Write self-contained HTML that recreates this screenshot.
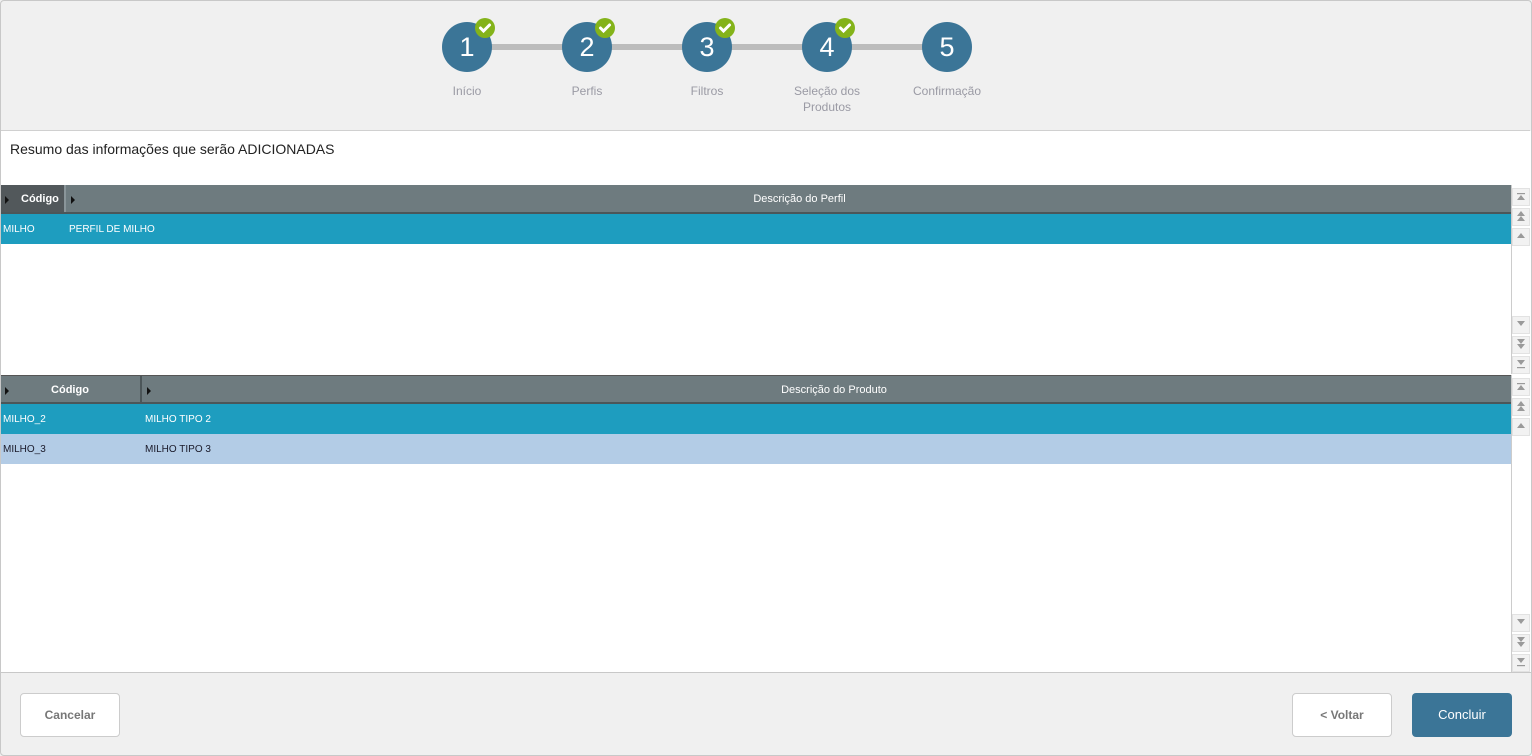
<!DOCTYPE html>
<html><head><meta charset="utf-8"><style>
*{box-sizing:border-box;margin:0;padding:0}
body{width:1532px;height:756px;overflow:hidden;font-family:"Liberation Sans",Arial,sans-serif;background:#fff}
.frame{position:absolute;left:0;top:0;width:1532px;height:756px;background:#f0f0f0;overflow:hidden}
.bord{position:absolute;left:0;top:0;width:1532px;height:756px;border:1px solid #c8c8c8;border-radius:4px;z-index:5}
.top{position:absolute;left:0;top:0;width:1530px;height:131px;border-bottom:1px solid #d0d0d0}
.line{position:absolute;top:44px;height:6px;background:#bcbcbc}
.circ{position:absolute;top:22px;width:50px;height:50px;border-radius:50%;background:#3b7597;color:#fff;font-size:27px;text-align:center;line-height:50px}
.lbl{position:absolute;top:83px;width:100px;text-align:center;font-size:12px;color:#9a9aa4;line-height:16px}
.white{position:absolute;left:0;top:131px;width:1531px;height:542px;background:#fff;border-bottom:1px solid #c8c8c8}
.title{position:absolute;left:10px;top:10px;font-size:14px;color:#222}
.hdr{position:absolute;left:0;width:1511px;height:29px;background:#6e7b7f;color:#fff;font-size:11px;border-bottom:2px solid #4c5659}
.hdr div{position:absolute;top:0;height:27px;line-height:28px}
.tri{position:absolute;width:0;height:0;border-top:4px solid transparent;border-bottom:4px solid transparent;border-left:4px solid #111;top:11px}
.row{position:absolute;left:0;width:1511px;height:30px;font-size:10px;line-height:32px}
.row span{position:absolute}
.sb{position:absolute;left:1511px;width:19px;background:#fff;border-left:1px solid #ccc}
.sbb{position:absolute;left:1512px;width:18px;height:18px;background:#f2f2f2;border:1px solid #e4e4e4}
.btn{position:absolute;top:693px;width:100px;height:44px;border-radius:4px;font-size:12px;text-align:center;line-height:43px}
</style></head><body><div class="frame">
<div class="top">
<div class="line" style="left:490px;width:440px"></div>
<div class="circ" style="left:442px">1</div>
<div class="circ" style="left:562px">2</div>
<div class="circ" style="left:682px">3</div>
<div class="circ" style="left:802px">4</div>
<div class="circ" style="left:922px">5</div>
<svg style="position:absolute;left:475px;top:18px" width="400" height="22">
<g fill="#84b31a"><circle cx="10" cy="10" r="10"/><circle cx="130" cy="10" r="10"/><circle cx="250" cy="10" r="10"/><circle cx="370" cy="10" r="10"/></g>
<g fill="none" stroke="#fff" stroke-width="3" stroke-linecap="round"><path d="M5.5 10l3 3 6-6"/><path d="M125.5 10l3 3 6-6"/><path d="M245.5 10l3 3 6-6"/><path d="M365.5 10l3 3 6-6"/></g></svg>
<div class="lbl" style="left:417px">Início</div>
<div class="lbl" style="left:537px">Perfis</div>
<div class="lbl" style="left:657px">Filtros</div>
<div class="lbl" style="left:777px">Seleção dos<br>Produtos</div>
<div class="lbl" style="left:897px">Confirmação</div>
</div>
<div class="white">
<div class="title">Resumo das informações que serão ADICIONADAS</div>
</div>
<div class="hdr" style="top:185px"><div style="left:0;width:66px;background:#52585b;border-right:2px solid #8a9599"><span class="tri" style="left:5px"></span><b style="position:absolute;left:21px">Código</b></div><span class="tri" style="left:71px"></span><div style="left:68px;width:1463px;text-align:center">Descrição do Perfil</div></div>
<div class="row" style="top:214px;background:#1e9dbf;color:#fff"><span style="left:3px">MILHO</span><span style="left:69px">PERFIL DE MILHO</span></div>
<div class="sb" style="top:185px;height:189px"></div>
<div class="sb" style="top:375px;height:297px"></div>
<svg style="position:absolute;left:1512px;top:185px" width="19" height="488" fill="#9a9a9a">
<defs><g id="b"><rect x="0.5" y="0.5" width="17" height="17" fill="#f2f2f2" stroke="#e2e2e2"/></g></defs>
<g id="set">
<use href="#b" y="3"/><rect x="5" y="8" width="8" height="1.2"/><path d="M9 10l4 5h-8z"/>
<use href="#b" y="23"/><path d="M9 26l4 5h-8z M9 31l4 5h-8z"/>
<use href="#b" y="43"/><path d="M9 48l4 5h-8z"/>
</g>
<use href="#b" y="131"/><path d="M5 136h8l-4 5z"/>
<use href="#b" y="151"/><path d="M5 154h8l-4 5z M5 159h8l-4 5z"/>
<use href="#b" y="171"/><path d="M5 175h8l-4 5z"/><rect x="5" y="182" width="8" height="1.2"/>
<use href="#set" y="190"/>
<use href="#b" y="429"/><path d="M5 434h8l-4 5z"/>
<use href="#b" y="449"/><path d="M5 452h8l-4 5z M5 457h8l-4 5z"/>
<use href="#b" y="469"/><path d="M5 473h8l-4 5z"/><rect x="5" y="480" width="8" height="1.2"/>
</svg>
<div class="hdr" style="top:375px;border-top:1px solid #555"><span class="tri" style="left:5px"></span><div style="left:0;width:142px;border-right:2px solid #4c5659;text-align:center;font-weight:bold">Código</div><span class="tri" style="left:147px"></span><div style="left:144px;width:1380px;text-align:center">Descrição do Produto</div></div>
<div class="row" style="top:404px;background:#1e9dbf;color:#fff"><span style="left:3px">MILHO_2</span><span style="left:145px">MILHO TIPO 2</span></div>
<div class="row" style="top:434px;background:#b3cce6;color:#1a1a2a"><span style="left:3px">MILHO_3</span><span style="left:145px">MILHO TIPO 3</span></div>
<div class="btn" style="left:20px;background:#fff;border:1px solid #ccc;color:#777;font-weight:bold">Cancelar</div>
<div class="btn" style="left:1292px;background:#fff;border:1px solid #ccc;color:#777;font-weight:bold">&lt; Voltar</div>
<div class="btn" style="left:1412px;background:#3b7597;color:#fff;font-size:13px;line-height:44px">Concluir</div>
<div class="bord"></div>
</div></body></html>
